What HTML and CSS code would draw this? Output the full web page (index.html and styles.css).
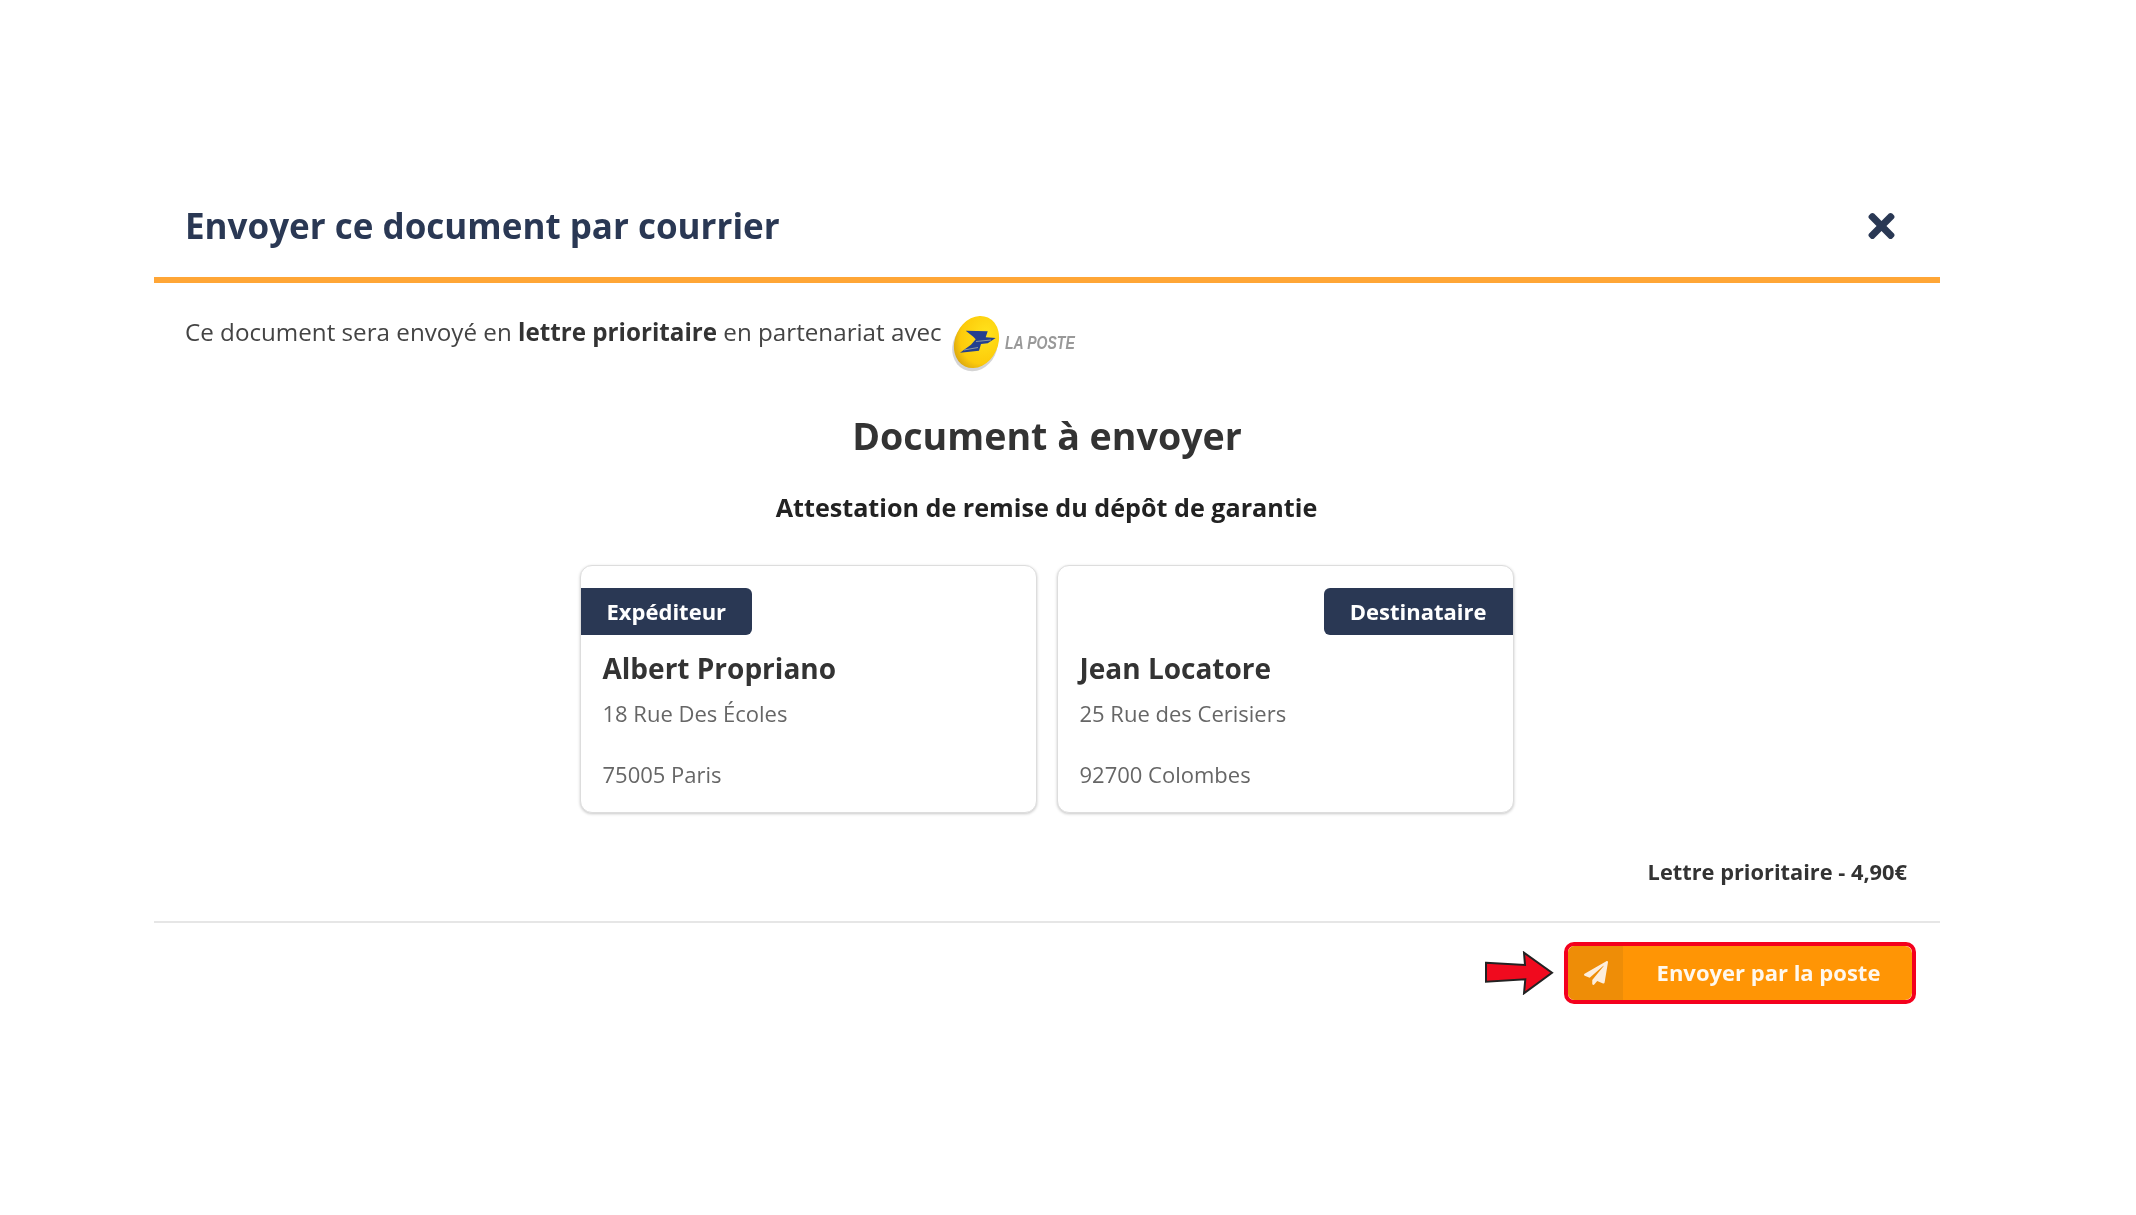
FILE: index.html
```html
<!DOCTYPE html>
<html lang="fr">
<head>
<meta charset="utf-8">
<title>Envoyer ce document par courrier</title>
<link rel="stylesheet" href="styles.css">
</head>
<body>
<main class="modal">
  <header class="modal-header">
    <h1 class="modal-title">Envoyer ce document par courrier</h1>
    <svg class="close-icon" viewBox="0 0 352 512" aria-label="Fermer"><path fill="#2a3854" d="M242.72 256l100.07-100.07c12.28-12.28 12.28-32.19 0-44.48l-22.24-22.24c-12.28-12.28-32.19-12.28-44.48 0L176 189.28 75.93 89.21c-12.28-12.28-32.19-12.28-44.48 0L9.21 111.45c-12.28 12.28-12.28 32.19 0 44.48L109.28 256 9.21 356.07c-12.28 12.28-12.28 32.19 0 44.48l22.24 22.24c12.28 12.28 32.2 12.28 44.48 0L176 322.72l100.07 100.07c12.28 12.28 32.2 12.28 44.48 0l22.24-22.24c12.28-12.28 12.28-32.19 0-44.48L242.72 256z"/></svg>
  </header>
  <section class="modal-body">
    <p class="intro">
      <span>Ce document sera envoyé en <strong>lettre prioritaire</strong> en partenariat avec</span>
      <span class="logo">
        <svg class="logo-mark" viewBox="0 0 50 60" aria-hidden="true">
          <defs>
            <radialGradient id="gold" cx="0.62" cy="0.3" r="0.8"><stop offset="0" stop-color="#ffe31c"/><stop offset="0.7" stop-color="#fdcb0a"/><stop offset="1" stop-color="#cf9a10"/></radialGradient>
          </defs>
          <ellipse cx="24" cy="33" rx="22" ry="26" transform="rotate(25 24 33)" fill="#aaa" opacity=".5"/>
          <ellipse cx="25.5" cy="29" rx="21.5" ry="27" transform="rotate(25 25.5 29)" fill="url(#gold)"/>
          <path d="M14.7 17.7 L36.7 18.3 L34.7 24.3 L44.7 25 L36.7 30.3 L30 31 L28 37.7 L9 39.7 L20 31.7 L24.7 26.3 L22.3 23.7 Z" fill="#24408f"/>
          <path d="M13 37 L27 34.5 M25 28.5 L40 27" stroke="#8c98a0" stroke-width="1.2" fill="none"/>
        </svg>
        <span class="logo-word">LA POSTE</span>
      </span>
    </p>
    <h2 class="doc-heading">Document à envoyer</h2>
    <h3 class="doc-name">Attestation de remise du dépôt de garantie</h3>
    <div class="cards">
      <article class="card">
        <div class="badge badge-left">Expéditeur</div>
        <div class="person">Albert Propriano</div>
        <div class="addr">18 Rue Des Écoles</div>
        <div class="addr addr-city">75005 Paris</div>
      </article>
      <article class="card">
        <div class="badge badge-right">Destinataire</div>
        <div class="person">Jean Locatore</div>
        <div class="addr">25 Rue des Cerisiers</div>
        <div class="addr addr-city">92700 Colombes</div>
      </article>
    </div>
    <p class="price">Lettre prioritaire - 4,90€</p>
  </section>
  <footer class="modal-footer">
    <svg class="arrow" viewBox="0 0 70 44" aria-hidden="true"><path d="M1 11.7 L40 14 L39 1.7 L67 21.7 L39 42.3 L40.3 28.3 L1 30.7 Z" fill="#f00a1e" stroke="#222" stroke-width="2"/></svg>
    <div class="send-outline">
      <button class="send-btn" type="button">
        <span class="send-icon"><svg viewBox="0 0 512 512" aria-hidden="true"><path fill="#fdeedd" d="M476 3.2L12.5 270.6c-18.1 10.4-15.8 35.6 2.2 43.2L121 358.4l287.3-253.2c5.5-4.9 13.3 2.6 8.6 8.3L176 407v80.5c0 23.6 28.5 32.9 42.5 15.8L282 426l124.6 52.2c14.2 6 30.4-2.9 33-18.2l72-432C515 7.8 493.3-6.8 476 3.2z"/></svg></span>
        <span class="send-label">Envoyer par la poste</span>
      </button>
    </div>
  </footer>
</main>
</body>
</html>
```

FILE: styles.css
```css
* { box-sizing: border-box; }
html, body { margin: 0; background: #fff; }
body { font-family: "Open Sans", "Noto Sans", sans-serif; color: #333; height: 1215px; overflow: hidden; }

.modal { width: 1786px; margin: 0 0 0 154px; padding-top: 189px; filter: blur(.6px); }

.modal-header {
  display: flex; align-items: center; justify-content: space-between;
  height: 94px; padding: 0 45px 14px 31px;
  border-bottom: 6px solid #ffa636;
}
.modal-title { margin: 0; font-size: 35px; font-weight: 700; color: #2a3854; line-height: 48px; }
.close-icon { width: 27px; height: 38px; display: block; }

.modal-body { padding: 0 31px; }
.intro { display: flex; align-items: flex-start; margin: 32px 0 0; font-size: 24.2px; line-height: 34px; color: #444; height: 79px; }
.intro strong { font-weight: 700; color: #333; }
.logo { display: flex; align-items: center; margin: -2px 0 0 9px; height: 60px; }
.logo-mark { width: 50px; height: 60px; display: block; }
.logo-word { font-family: "Liberation Sans", sans-serif; font-style: italic; font-weight: 700; font-size: 19px; color: #999; margin-left: 4px; transform: scaleX(.74); transform-origin: left center; }

.doc-heading { margin: 16px 0 0; text-align: center; font-size: 37.6px; line-height: 52px; font-weight: 700; color: #333; }
.doc-name { margin: 27px 0 0; padding-right: 1px; text-align: center; font-size: 25.15px; line-height: 36px; font-weight: 700; color: #222; }

.cards { display: flex; justify-content: center; gap: 20px; margin-top: 40px; padding-right: 1px; }
.card {
  width: 457px; height: 248px; background: #fff;
  border: 1px solid #ddd; border-radius: 12px; box-shadow: 0 1px 3px rgba(0,0,0,.22);
  padding-top: 22px; display: flex; flex-direction: column;
}
.badge { height: 47px; line-height: 46px; background: #2a3854; color: #fff; font-size: 22px; font-weight: 700; padding: 0 26px; }
.badge-left { align-self: flex-start; border-radius: 0 6px 6px 0; }
.badge-right { align-self: flex-end; border-radius: 6px 0 0 6px; }
.person { margin: 13px 0 0 22px; font-size: 28px; line-height: 40px; font-weight: 700; color: #333; }
.addr { margin: 9px 0 0 22px; font-size: 22px; line-height: 32px; color: #666; }
.addr-city { margin-top: 29px; }

.price { margin: 42px 0 0; padding-right: 2px; text-align: right; font-size: 21.8px; line-height: 33px; font-weight: 700; color: #333; }

.modal-footer {
  display: flex; justify-content: flex-end; align-items: center; gap: 9px;
  margin-top: 33px; padding: 19px 24px 0 0; border-top: 2px solid #e6e6e6;
}
.arrow { width: 70px; height: 44px; display: block; }
.send-outline { border: 4px solid #f4001d; border-radius: 10px; background: #fff; }
.send-btn {
  display: flex; align-items: stretch; width: 344px; height: 54px; padding: 0; border: 0;
  border-radius: 7px; overflow: hidden; background: #ff9505; color: #fff; font-family: inherit;
}
.send-icon { width: 55px; background: #ee8d07; display: flex; align-items: center; justify-content: center; }
.send-icon svg { width: 24px; height: 24px; display: block; }
.send-label { flex: 1; text-align: center; line-height: 52px; padding-left: 2px; font-size: 22px; font-weight: 700; color: #fff8ee; }
```
